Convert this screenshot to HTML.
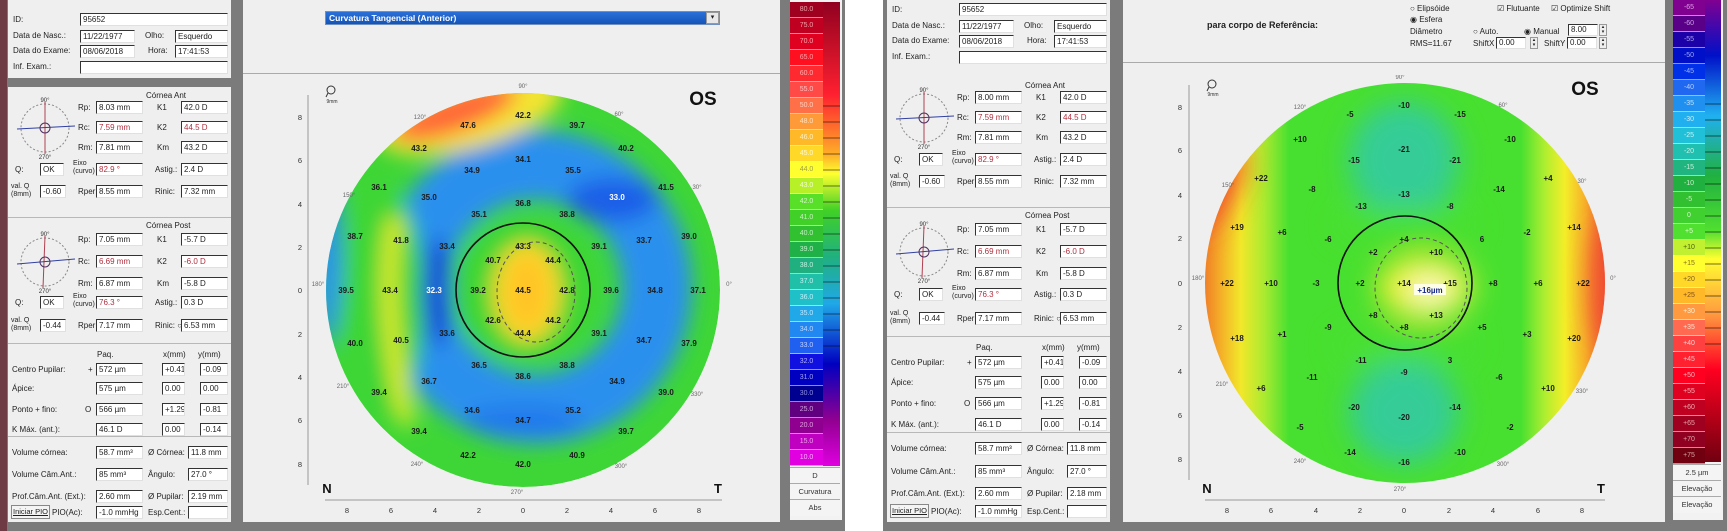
<!DOCTYPE html>
<html><head><meta charset="utf-8">
<style>
*{margin:0;padding:0;box-sizing:border-box}
body{width:1727px;height:531px;background:#fff;position:relative;overflow:hidden;font-family:"Liberation Sans",Arial,sans-serif;color:#222}
.a{position:absolute}
.g{position:absolute;background:#7b7b7b}
.pn{position:absolute;background:#efefef}
.l{position:absolute;font-size:8px;line-height:10px;white-space:nowrap;color:#222}
.b{position:absolute;height:13px;background:#fff;border-top:1px solid #333;border-left:1px solid #333;border-bottom:1px solid #e0e0e0;border-right:1px solid #e0e0e0;font-size:8px;line-height:11px;padding-left:2px;white-space:nowrap;color:#222;overflow:hidden}
.r{color:#b03040}
.hr{position:absolute;height:1px;background:#b8b8b8;left:0;right:0}
.cb div{position:absolute;height:16px;font-size:7px;line-height:16px;text-align:center;border-bottom:1px solid rgba(255,255,255,.55)}
.cbl div{position:absolute;left:0;width:100%;background:#f4f4f4;font-size:7.5px;text-align:center;border-top:1px solid #aaa;color:#333}
</style></head><body>

<!-- left screenshot frame -->
<div class="g" style="left:0;top:0;width:845px;height:531px"></div>
<div class="a" style="left:0;top:0;width:7px;height:531px;background:#6e3a44"></div>
<!-- right screenshot frame -->
<div class="g" style="left:883px;top:0;width:844px;height:531px"></div>

<!-- LEFT INFO PANEL -->
<div class="a" style="left:8px;top:0;width:223px;height:522px">
 <div class="pn" style="left:0;top:0;width:223px;height:78px"></div>
 <div class="l" style="left:5px;top:15px">ID:</div><div class="b" style="left:72px;top:13px;width:148px">95652</div>
 <div class="l" style="left:5px;top:31px">Data de Nasc.:</div><div class="b" style="left:72px;top:30px;width:55px">11/22/1977</div>
 <div class="l" style="left:137px;top:31px">Olho:</div><div class="b" style="left:167px;top:30px;width:53px">Esquerdo</div>
 <div class="l" style="left:5px;top:46px">Data do Exame:</div><div class="b" style="left:72px;top:45px;width:55px">08/06/2018</div>
 <div class="l" style="left:140px;top:46px">Hora:</div><div class="b" style="left:167px;top:45px;width:53px">17:41:53</div>
 <div class="l" style="left:5px;top:62px">Inf. Exam.:</div><div class="b" style="left:72px;top:61px;width:148px"></div>

 <div class="pn" style="left:0;top:87px;width:223px;height:435px"></div>
 <div class="l" style="left:138px;top:91px">Córnea Ant</div>
 <svg class="a" style="left:5px;top:96px" width="64" height="64" viewBox="0 0 64 64"><circle cx="32" cy="32" r="24" fill="none" stroke="#888" stroke-dasharray="2 2"/><line x1="32" y1="6" x2="32" y2="58" stroke="#b04050"/><line x1="4" y1="33" x2="62" y2="30" stroke="#3040a0"/><circle cx="32" cy="32" r="5" fill="none" stroke="#503060"/><text x="32" y="6" font-size="6" text-anchor="middle" fill="#333">90°</text><text x="32" y="63" font-size="6" text-anchor="middle" fill="#333">270°</text></svg>
 <div class="l" style="left:70px;top:103px">Rp:</div><div class="b" style="left:88px;top:101px;width:47px">8.03 mm</div>
 <div class="l" style="left:149px;top:103px">K1</div><div class="b" style="left:173px;top:101px;width:47px">42.0 D</div>
 <div class="l" style="left:70px;top:123px">Rc:</div><div class="b r" style="left:88px;top:121px;width:47px">7.59 mm</div>
 <div class="l" style="left:149px;top:123px">K2</div><div class="b r" style="left:173px;top:121px;width:47px">44.5 D</div>
 <div class="l" style="left:70px;top:143px">Rm:</div><div class="b" style="left:88px;top:141px;width:47px">7.81 mm</div>
 <div class="l" style="left:149px;top:143px">Km</div><div class="b" style="left:173px;top:141px;width:47px">43.2 D</div>
 <div class="l" style="left:7px;top:165px">Q:</div><div class="b" style="left:32px;top:163px;width:24px">OK</div>
 <div class="l" style="left:65px;top:160px;font-size:7px;line-height:8px">Eixo<br>(curvo)</div><div class="b r" style="left:88px;top:163px;width:47px">82.9 °</div>
 <div class="l" style="left:147px;top:165px">Astig.:</div><div class="b" style="left:173px;top:163px;width:47px">2.4 D</div>
 <div class="l" style="left:3px;top:183px;font-size:7px;line-height:8px">val. Q<br>(8mm)</div><div class="b" style="left:32px;top:185px;width:26px">-0.60</div>
 <div class="l" style="left:70px;top:187px">Rper:</div><div class="b" style="left:88px;top:185px;width:47px">8.55 mm</div>
 <div class="l" style="left:147px;top:187px">Rinic:</div><div class="b" style="left:173px;top:185px;width:47px">7.32 mm</div>
 <div class="hr" style="top:217px"></div>
 <div class="l" style="left:138px;top:221px">Córnea Post</div>
 <svg class="a" style="left:5px;top:230px" width="64" height="64" viewBox="0 0 64 64"><circle cx="32" cy="32" r="24" fill="none" stroke="#888" stroke-dasharray="2 2"/><line x1="32" y1="6" x2="30" y2="58" stroke="#b04050"/><line x1="4" y1="34" x2="62" y2="29" stroke="#3040a0"/><circle cx="32" cy="32" r="5" fill="none" stroke="#503060"/><text x="32" y="6" font-size="6" text-anchor="middle" fill="#333">90°</text><text x="32" y="63" font-size="6" text-anchor="middle" fill="#333">270°</text></svg>
 <div class="l" style="left:70px;top:235px">Rp:</div><div class="b" style="left:88px;top:233px;width:47px">7.05 mm</div>
 <div class="l" style="left:149px;top:235px">K1</div><div class="b" style="left:173px;top:233px;width:47px">-5.7 D</div>
 <div class="l" style="left:70px;top:257px">Rc:</div><div class="b r" style="left:88px;top:255px;width:47px">6.69 mm</div>
 <div class="l" style="left:149px;top:257px">K2</div><div class="b r" style="left:173px;top:255px;width:47px">-6.0 D</div>
 <div class="l" style="left:70px;top:279px">Rm:</div><div class="b" style="left:88px;top:277px;width:47px">6.87 mm</div>
 <div class="l" style="left:149px;top:279px">Km</div><div class="b" style="left:173px;top:277px;width:47px">-5.8 D</div>
 <div class="l" style="left:7px;top:298px">Q:</div><div class="b" style="left:32px;top:296px;width:24px">OK</div>
 <div class="l" style="left:65px;top:293px;font-size:7px;line-height:8px">Eixo<br>(curvo)</div><div class="b r" style="left:88px;top:296px;width:47px">76.3 °</div>
 <div class="l" style="left:147px;top:298px">Astig.:</div><div class="b" style="left:173px;top:296px;width:47px">0.3 D</div>
 <div class="l" style="left:3px;top:317px;font-size:7px;line-height:8px">val. Q<br>(8mm)</div><div class="b" style="left:32px;top:319px;width:26px">-0.44</div>
 <div class="l" style="left:70px;top:321px">Rper:</div><div class="b" style="left:88px;top:319px;width:47px">7.17 mm</div>
 <div class="l" style="left:147px;top:321px">Rinic: ○</div><div class="b" style="left:173px;top:319px;width:47px">6.53 mm</div>
 <div class="hr" style="top:343px"></div>
 <div class="l" style="left:89px;top:350px">Paq.</div><div class="l" style="left:155px;top:350px">x(mm)</div><div class="l" style="left:190px;top:350px">y(mm)</div>
 <div class="l" style="left:4px;top:365px">Centro Pupilar:</div><div class="l" style="left:80px;top:365px">+</div><div class="b" style="left:88px;top:363px;width:47px">572 µm</div><div class="b" style="left:154px;top:363px;width:23px">+0.41</div><div class="b" style="left:192px;top:363px;width:28px">-0.09</div>
 <div class="l" style="left:4px;top:384px">Ápice:</div><div class="b" style="left:88px;top:382px;width:47px">575 µm</div><div class="b" style="left:154px;top:382px;width:23px">0.00</div><div class="b" style="left:192px;top:382px;width:28px">0.00</div>
 <div class="l" style="left:4px;top:405px">Ponto + fino:</div><div class="l" style="left:77px;top:405px">O</div><div class="b" style="left:88px;top:403px;width:47px">566 µm</div><div class="b" style="left:154px;top:403px;width:23px">+1.29</div><div class="b" style="left:192px;top:403px;width:28px">-0.81</div>
 <div class="l" style="left:4px;top:425px">K Máx. (ant.):</div><div class="b" style="left:88px;top:423px;width:47px">46.1 D</div><div class="b" style="left:154px;top:423px;width:23px">0.00</div><div class="b" style="left:192px;top:423px;width:28px">-0.14</div>
 <div class="hr" style="top:436px"></div>
 <div class="l" style="left:4px;top:448px">Volume córnea:</div><div class="b" style="left:88px;top:446px;width:47px">58.7 mm³</div><div class="l" style="left:140px;top:448px">Ø Córnea:</div><div class="b" style="left:180px;top:446px;width:40px">11.8 mm</div>
 <div class="l" style="left:4px;top:470px">Volume Câm.Ant.:</div><div class="b" style="left:88px;top:468px;width:47px">85 mm³</div><div class="l" style="left:140px;top:470px">Ângulo:</div><div class="b" style="left:180px;top:468px;width:40px">27.0 °</div>
 <div class="l" style="left:4px;top:492px">Prof.Câm.Ant. (Ext.):</div><div class="b" style="left:88px;top:490px;width:47px">2.60 mm</div><div class="l" style="left:140px;top:492px">Ø Pupilar:</div><div class="b" style="left:180px;top:490px;width:40px">2.19 mm</div>
 <div class="l" style="left:3px;top:505px;width:39px;height:14px;border:1px solid #888;background:#f4f4f4;line-height:12px;text-align:center;text-decoration:underline;font-size:7.5px">Iniciar PIO</div>
 <div class="l" style="left:44px;top:508px">PIO(Ac):</div><div class="b" style="left:88px;top:506px;width:47px">-1.0 mmHg</div><div class="l" style="left:140px;top:508px">Esp.Cent.:</div><div class="b" style="left:180px;top:506px;width:40px"></div>
</div>

<!-- RIGHT INFO PANEL (copy) -->
<div class="a" style="left:887px;top:0;width:223px;height:522px">
 <div class="pn" style="left:0;top:0;width:223px;height:78px"></div>
 <div class="l" style="left:5px;top:5px">ID:</div><div class="b" style="left:72px;top:3px;width:148px">95652</div>
 <div class="l" style="left:5px;top:21px">Data de Nasc.:</div><div class="b" style="left:72px;top:20px;width:55px">11/22/1977</div>
 <div class="l" style="left:137px;top:21px">Olho:</div><div class="b" style="left:167px;top:20px;width:53px">Esquerdo</div>
 <div class="l" style="left:5px;top:36px">Data do Exame:</div><div class="b" style="left:72px;top:35px;width:55px">08/06/2018</div>
 <div class="l" style="left:140px;top:36px">Hora:</div><div class="b" style="left:167px;top:35px;width:53px">17:41:53</div>
 <div class="l" style="left:5px;top:52px">Inf. Exam.:</div><div class="b" style="left:72px;top:51px;width:148px"></div>
 <div class="pn" style="left:0;top:77px;width:223px;height:445px"></div>
 <div class="l" style="left:138px;top:81px">Córnea Ant</div>
 <svg class="a" style="left:5px;top:86px" width="64" height="64" viewBox="0 0 64 64"><circle cx="32" cy="32" r="24" fill="none" stroke="#888" stroke-dasharray="2 2"/><line x1="32" y1="6" x2="32" y2="58" stroke="#b04050"/><line x1="4" y1="33" x2="62" y2="30" stroke="#3040a0"/><circle cx="32" cy="32" r="5" fill="none" stroke="#503060"/><text x="32" y="6" font-size="6" text-anchor="middle" fill="#333">90°</text><text x="32" y="63" font-size="6" text-anchor="middle" fill="#333">270°</text></svg>
 <div class="l" style="left:70px;top:93px">Rp:</div><div class="b" style="left:88px;top:91px;width:47px">8.00 mm</div>
 <div class="l" style="left:149px;top:93px">K1</div><div class="b" style="left:173px;top:91px;width:47px">42.0 D</div>
 <div class="l" style="left:70px;top:113px">Rc:</div><div class="b r" style="left:88px;top:111px;width:47px">7.59 mm</div>
 <div class="l" style="left:149px;top:113px">K2</div><div class="b r" style="left:173px;top:111px;width:47px">44.5 D</div>
 <div class="l" style="left:70px;top:133px">Rm:</div><div class="b" style="left:88px;top:131px;width:47px">7.81 mm</div>
 <div class="l" style="left:149px;top:133px">Km</div><div class="b" style="left:173px;top:131px;width:47px">43.2 D</div>
 <div class="l" style="left:7px;top:155px">Q:</div><div class="b" style="left:32px;top:153px;width:24px">OK</div>
 <div class="l" style="left:65px;top:150px;font-size:7px;line-height:8px">Eixo<br>(curvo)</div><div class="b r" style="left:88px;top:153px;width:47px">82.9 °</div>
 <div class="l" style="left:147px;top:155px">Astig.:</div><div class="b" style="left:173px;top:153px;width:47px">2.4 D</div>
 <div class="l" style="left:3px;top:173px;font-size:7px;line-height:8px">val. Q<br>(8mm)</div><div class="b" style="left:32px;top:175px;width:26px">-0.60</div>
 <div class="l" style="left:70px;top:177px">Rper:</div><div class="b" style="left:88px;top:175px;width:47px">8.55 mm</div>
 <div class="l" style="left:147px;top:177px">Rinic:</div><div class="b" style="left:173px;top:175px;width:47px">7.32 mm</div>
 <div class="hr" style="top:207px"></div>
 <div class="l" style="left:138px;top:211px">Córnea Post</div>
 <svg class="a" style="left:5px;top:220px" width="64" height="64" viewBox="0 0 64 64"><circle cx="32" cy="32" r="24" fill="none" stroke="#888" stroke-dasharray="2 2"/><line x1="32" y1="6" x2="30" y2="58" stroke="#b04050"/><line x1="4" y1="34" x2="62" y2="29" stroke="#3040a0"/><circle cx="32" cy="32" r="5" fill="none" stroke="#503060"/><text x="32" y="6" font-size="6" text-anchor="middle" fill="#333">90°</text><text x="32" y="63" font-size="6" text-anchor="middle" fill="#333">270°</text></svg>
 <div class="l" style="left:70px;top:225px">Rp:</div><div class="b" style="left:88px;top:223px;width:47px">7.05 mm</div>
 <div class="l" style="left:149px;top:225px">K1</div><div class="b" style="left:173px;top:223px;width:47px">-5.7 D</div>
 <div class="l" style="left:70px;top:247px">Rc:</div><div class="b r" style="left:88px;top:245px;width:47px">6.69 mm</div>
 <div class="l" style="left:149px;top:247px">K2</div><div class="b r" style="left:173px;top:245px;width:47px">-6.0 D</div>
 <div class="l" style="left:70px;top:269px">Rm:</div><div class="b" style="left:88px;top:267px;width:47px">6.87 mm</div>
 <div class="l" style="left:149px;top:269px">Km</div><div class="b" style="left:173px;top:267px;width:47px">-5.8 D</div>
 <div class="l" style="left:7px;top:290px">Q:</div><div class="b" style="left:32px;top:288px;width:24px">OK</div>
 <div class="l" style="left:65px;top:285px;font-size:7px;line-height:8px">Eixo<br>(curvo)</div><div class="b r" style="left:88px;top:288px;width:47px">76.3 °</div>
 <div class="l" style="left:147px;top:290px">Astig.:</div><div class="b" style="left:173px;top:288px;width:47px">0.3 D</div>
 <div class="l" style="left:3px;top:310px;font-size:7px;line-height:8px">val. Q<br>(8mm)</div><div class="b" style="left:32px;top:312px;width:26px">-0.44</div>
 <div class="l" style="left:70px;top:314px">Rper:</div><div class="b" style="left:88px;top:312px;width:47px">7.17 mm</div>
 <div class="l" style="left:147px;top:314px">Rinic: ○</div><div class="b" style="left:173px;top:312px;width:47px">6.53 mm</div>
 <div class="hr" style="top:336px"></div>
 <div class="l" style="left:89px;top:343px">Paq.</div><div class="l" style="left:155px;top:343px">x(mm)</div><div class="l" style="left:190px;top:343px">y(mm)</div>
 <div class="l" style="left:4px;top:358px">Centro Pupilar:</div><div class="l" style="left:80px;top:358px">+</div><div class="b" style="left:88px;top:356px;width:47px">572 µm</div><div class="b" style="left:154px;top:356px;width:23px">+0.41</div><div class="b" style="left:192px;top:356px;width:28px">-0.09</div>
 <div class="l" style="left:4px;top:378px">Ápice:</div><div class="b" style="left:88px;top:376px;width:47px">575 µm</div><div class="b" style="left:154px;top:376px;width:23px">0.00</div><div class="b" style="left:192px;top:376px;width:28px">0.00</div>
 <div class="l" style="left:4px;top:399px">Ponto + fino:</div><div class="l" style="left:77px;top:399px">O</div><div class="b" style="left:88px;top:397px;width:47px">566 µm</div><div class="b" style="left:154px;top:397px;width:23px">+1.29</div><div class="b" style="left:192px;top:397px;width:28px">-0.81</div>
 <div class="l" style="left:4px;top:420px">K Máx. (ant.):</div><div class="b" style="left:88px;top:418px;width:47px">46.1 D</div><div class="b" style="left:154px;top:418px;width:23px">0.00</div><div class="b" style="left:192px;top:418px;width:28px">-0.14</div>
 <div class="hr" style="top:432px"></div>
 <div class="l" style="left:4px;top:444px">Volume córnea:</div><div class="b" style="left:88px;top:442px;width:47px">58.7 mm³</div><div class="l" style="left:140px;top:444px">Ø Córnea:</div><div class="b" style="left:180px;top:442px;width:40px">11.8 mm</div>
 <div class="l" style="left:4px;top:467px">Volume Câm.Ant.:</div><div class="b" style="left:88px;top:465px;width:47px">85 mm³</div><div class="l" style="left:140px;top:467px">Ângulo:</div><div class="b" style="left:180px;top:465px;width:40px">27.0 °</div>
 <div class="l" style="left:4px;top:489px">Prof.Câm.Ant. (Ext.):</div><div class="b" style="left:88px;top:487px;width:47px">2.60 mm</div><div class="l" style="left:140px;top:489px">Ø Pupilar:</div><div class="b" style="left:180px;top:487px;width:40px">2.18 mm</div>
 <div class="l" style="left:3px;top:504px;width:39px;height:14px;border:1px solid #888;background:#f4f4f4;line-height:12px;text-align:center;text-decoration:underline;font-size:7.5px">Iniciar PIO</div>
 <div class="l" style="left:44px;top:507px">PIO(Ac):</div><div class="b" style="left:88px;top:505px;width:47px">-1.0 mmHg</div><div class="l" style="left:140px;top:507px">Esp.Cent.:</div><div class="b" style="left:180px;top:505px;width:40px"></div>
</div>

<!-- map panels -->
<div class="pn" style="left:243px;top:0;width:537px;height:522px"></div>
<div class="a" style="left:243px;top:73px;width:537px;height:1px;background:#aaa"></div>
<div class="pn" style="left:1123px;top:0;width:542px;height:522px"></div>
<div class="a" style="left:1123px;top:62px;width:542px;height:1px;background:#aaa"></div>

<!-- dropdown -->
<div class="a" style="left:325px;top:11px;width:395px;height:14px;background:linear-gradient(#2a70d8,#1454b8);border:1px solid #7090c0"></div>
<div class="a" style="left:329px;top:12px;font-size:8.5px;line-height:12px;font-weight:bold;color:#fff">Curvatura Tangencial (Anterior)</div>
<div class="a" style="left:706px;top:12px;width:13px;height:12px;background:#e8e8e8;border:1px solid #999;font-size:7px;line-height:10px;text-align:center">▾</div>

<!-- right header -->
<div class="a" style="left:1207px;top:20px;font-size:9px;font-weight:bold;color:#222">para corpo de Referência:</div>
<div class="l" style="left:1410px;top:4px">○ Elipsóide</div>
<div class="l" style="left:1410px;top:15px">◉ Esfera</div>
<div class="l" style="left:1410px;top:27px">Diâmetro</div>
<div class="l" style="left:1410px;top:39px">RMS=11.67</div>
<div class="l" style="left:1497px;top:4px">☑ Flutuante</div>
<div class="l" style="left:1551px;top:4px">☑ Optimize Shift</div>
<div class="l" style="left:1473px;top:27px">○ Auto.</div>
<div class="l" style="left:1524px;top:27px">◉ Manual</div>
<div class="b" style="left:1568px;top:24px;width:30px;height:12px;line-height:10px">8.00</div>
<div class="a" style="left:1599px;top:24px;width:8px;height:12px;border:1px solid #999;font-size:5px;line-height:5px;text-align:center">▴<br>▾</div>
<div class="l" style="left:1473px;top:39px">ShiftX</div>
<div class="b" style="left:1496px;top:37px;width:30px;height:12px;line-height:10px">0.00</div>
<div class="a" style="left:1530px;top:37px;width:8px;height:12px;border:1px solid #999;font-size:5px;line-height:5px;text-align:center">▴<br>▾</div>
<div class="l" style="left:1544px;top:39px">ShiftY</div>
<div class="b" style="left:1567px;top:37px;width:30px;height:12px;line-height:10px">0.00</div>
<div class="a" style="left:1599px;top:37px;width:8px;height:12px;border:1px solid #999;font-size:5px;line-height:5px;text-align:center">▴<br>▾</div>

<!-- colorbars -->
<div class="a" style="left:790px;top:0;width:52px;height:520px;background:#f2f2f2"></div>
<div class="a cb" style="left:790px;top:2px;width:50px;height:464px">
<div style="top:0;left:0;width:33px;background:#a00020;color:#e8a0a8">80.0</div>
<div style="top:16px;left:0;width:33px;background:#c00020;color:#f0a0a8">75.0</div>
<div style="top:32px;left:0;width:33px;background:#e00020;color:#f8a8b0">70.0</div>
<div style="top:48px;left:0;width:33px;background:#ff1020;color:#ffa0a8">65.0</div>
<div style="top:64px;left:0;width:33px;background:#ff2a30;color:#ffb0b0">60.0</div>
<div style="top:80px;left:0;width:33px;background:#ff4a48;color:#ffc0c0">55.0</div>
<div style="top:96px;left:0;width:33px;background:#ff7048;color:#ffd0c0">50.0</div>
<div style="top:112px;left:0;width:33px;background:#ff9a38;color:#ffe0c0">48.0</div>
<div style="top:128px;left:0;width:33px;background:#ffb828;color:#fff0c0">46.0</div>
<div style="top:144px;left:0;width:33px;background:#ffd828;color:#fff8d0">45.0</div>
<div style="top:160px;left:0;width:33px;background:#ffff30;color:#a0a040">44.0</div>
<div style="top:176px;left:0;width:33px;background:#b8f028;color:#f0ffd0">43.0</div>
<div style="top:192px;left:0;width:33px;background:#58e028;color:#d0f8c0">42.0</div>
<div style="top:208px;left:0;width:33px;background:#40d028;color:#c8f0c0">41.0</div>
<div style="top:224px;left:0;width:33px;background:#30c030;color:#c0f0c0">40.0</div>
<div style="top:240px;left:0;width:33px;background:#20b048;color:#c0f0c8">39.0</div>
<div style="top:256px;left:0;width:33px;background:#20b080;color:#c0f0e0">38.0</div>
<div style="top:272px;left:0;width:33px;background:#20c0a8;color:#c0f0f0">37.0</div>
<div style="top:288px;left:0;width:33px;background:#20c0c8;color:#c0f0f8">36.0</div>
<div style="top:304px;left:0;width:33px;background:#20a8e8;color:#c0e8ff">35.0</div>
<div style="top:320px;left:0;width:33px;background:#2088f0;color:#c0d8ff">34.0</div>
<div style="top:336px;left:0;width:33px;background:#2060f0;color:#c0d0ff">33.0</div>
<div style="top:352px;left:0;width:33px;background:#1010e0;color:#b0b0ff">32.0</div>
<div style="top:368px;left:0;width:33px;background:#0000c0;color:#a0a0f0">31.0</div>
<div style="top:384px;left:0;width:33px;background:#000090;color:#9090e0">30.0</div>
<div style="top:400px;left:0;width:33px;background:#600080;color:#d0a0e0">25.0</div>
<div style="top:416px;left:0;width:33px;background:#900090;color:#e0a0e0">20.0</div>
<div style="top:432px;left:0;width:33px;background:#c000c0;color:#f0a0f0">15.0</div>
<div style="top:448px;left:0;width:33px;background:#e000e0;color:#f8b0f8">10.0</div>
</div>
<svg class="a" style="left:823px;top:2px" width="17" height="464">
<rect width="17" height="464" fill="url(#lg1)"/>
<defs><linearGradient id="lg1" x1="0" y1="0" x2="0" y2="1"><stop offset="0" stop-color="#900020"/><stop offset=".2" stop-color="#ff2030"/><stop offset=".33" stop-color="#ffb028"/><stop offset=".37" stop-color="#ffff30"/><stop offset=".45" stop-color="#40d028"/><stop offset=".55" stop-color="#20b080"/><stop offset=".65" stop-color="#20a8e8"/><stop offset=".78" stop-color="#0000c0"/><stop offset=".9" stop-color="#900090"/><stop offset="1" stop-color="#e000e0"/></linearGradient></defs>
<g stroke="#000" stroke-width=".8" opacity=".7"><line x1="0" y1="104" x2="17" y2="104"/><line x1="0" y1="120" x2="17" y2="120"/><line x1="0" y1="136" x2="17" y2="136"/><line x1="0" y1="152" x2="17" y2="152"/><line x1="0" y1="168" x2="17" y2="168"/><line x1="0" y1="184" x2="17" y2="184"/><line x1="0" y1="200" x2="17" y2="200"/><line x1="0" y1="216" x2="17" y2="216"/><line x1="0" y1="232" x2="17" y2="232"/><line x1="0" y1="248" x2="17" y2="248"/><line x1="0" y1="264" x2="17" y2="264"/><line x1="0" y1="280" x2="17" y2="280"/><line x1="0" y1="296" x2="17" y2="296"/><line x1="0" y1="312" x2="17" y2="312"/><line x1="0" y1="328" x2="17" y2="328"/><line x1="0" y1="344" x2="17" y2="344"/></g>
</svg>
<div class="a cbl" style="left:790px;top:467px;width:50px;height:52px">
<div style="top:0;height:16px;line-height:15px">D</div><div style="top:16px;height:16px;line-height:15px">Curvatura</div><div style="top:32px;height:17px;line-height:15px">Abs</div>
</div>

<div class="a" style="left:1673px;top:0;width:50px;height:520px;background:#f2f2f2"></div>
<div class="a cb" style="left:1673px;top:0;width:48px;height:464px">
<div style="top:0;left:0;width:32px;background:#800090;color:#d8a0e0">-65</div>
<div style="top:16px;left:0;width:32px;background:#5a0088;color:#c8a0e0">-60</div>
<div style="top:32px;left:0;width:32px;background:#1c00a8;color:#a8a0f0">-55</div>
<div style="top:48px;left:0;width:32px;background:#0010c8;color:#a0a8f8">-50</div>
<div style="top:64px;left:0;width:32px;background:#0030e8;color:#a0b8ff">-45</div>
<div style="top:80px;left:0;width:32px;background:#2068f0;color:#b8d0ff">-40</div>
<div style="top:96px;left:0;width:32px;background:#2090f0;color:#c0e0ff">-35</div>
<div style="top:112px;left:0;width:32px;background:#20b0f0;color:#c8eeff">-30</div>
<div style="top:128px;left:0;width:32px;background:#20c0d8;color:#c8f4f8">-25</div>
<div style="top:144px;left:0;width:32px;background:#20c0b0;color:#c8f4e8">-20</div>
<div style="top:160px;left:0;width:32px;background:#20b480;color:#c8f0d8">-15</div>
<div style="top:176px;left:0;width:32px;background:#20b040;color:#c8f0c8">-10</div>
<div style="top:192px;left:0;width:32px;background:#30c030;color:#c8f0c0">-5</div>
<div style="top:208px;left:0;width:32px;background:#40d030;color:#d0f8c8">0</div>
<div style="top:224px;left:0;width:32px;background:#50e030;color:#d8ffc8">+5</div>
<div style="top:240px;left:0;width:32px;background:#c0f030;color:#506010">+10</div>
<div style="top:256px;left:0;width:32px;background:#ffff30;color:#807020">+15</div>
<div style="top:272px;left:0;width:32px;background:#ffd828;color:#806020">+20</div>
<div style="top:288px;left:0;width:32px;background:#ffb828;color:#805020">+25</div>
<div style="top:304px;left:0;width:32px;background:#ff9a40;color:#fff0d8">+30</div>
<div style="top:320px;left:0;width:32px;background:#ff6a50;color:#ffe0d0">+35</div>
<div style="top:336px;left:0;width:32px;background:#ff4040;color:#ffd0d0">+40</div>
<div style="top:352px;left:0;width:32px;background:#ff2030;color:#ffc0c0">+45</div>
<div style="top:368px;left:0;width:32px;background:#ff0020;color:#ffb0b8">+50</div>
<div style="top:384px;left:0;width:32px;background:#e00020;color:#f8b0b8">+55</div>
<div style="top:400px;left:0;width:32px;background:#c00020;color:#f0a8b0">+60</div>
<div style="top:416px;left:0;width:32px;background:#a00020;color:#e8a0a8">+65</div>
<div style="top:432px;left:0;width:32px;background:#900020;color:#e0a0a8">+70</div>
<div style="top:448px;left:0;width:32px;background:#700010;color:#d8a0a0">+75</div>
</div>
<svg class="a" style="left:1705px;top:0" width="16" height="462">
<defs><linearGradient id="lg2" x1="0" y1="0" x2="0" y2="1"><stop offset="0" stop-color="#800090"/><stop offset=".12" stop-color="#0010c8"/><stop offset=".25" stop-color="#20b0f0"/><stop offset=".38" stop-color="#20b040"/><stop offset=".5" stop-color="#50e030"/><stop offset=".56" stop-color="#ffff30"/><stop offset=".68" stop-color="#ff9a40"/><stop offset=".8" stop-color="#ff0020"/><stop offset="1" stop-color="#700010"/></linearGradient></defs>
<rect width="16" height="462" fill="url(#lg2)"/>
<g stroke="#000" stroke-width=".8" opacity=".7"><line x1="0" y1="104" x2="16" y2="104"/><line x1="0" y1="120" x2="16" y2="120"/><line x1="0" y1="136" x2="16" y2="136"/><line x1="0" y1="152" x2="16" y2="152"/><line x1="0" y1="168" x2="16" y2="168"/><line x1="0" y1="184" x2="16" y2="184"/><line x1="0" y1="200" x2="16" y2="200"/><line x1="0" y1="216" x2="16" y2="216"/><line x1="0" y1="232" x2="16" y2="232"/><line x1="0" y1="248" x2="16" y2="248"/><line x1="0" y1="264" x2="16" y2="264"/><line x1="0" y1="280" x2="16" y2="280"/><line x1="0" y1="296" x2="16" y2="296"/><line x1="0" y1="312" x2="16" y2="312"/><line x1="0" y1="328" x2="16" y2="328"/><line x1="0" y1="344" x2="16" y2="344"/></g>
</svg>
<div class="a cbl" style="left:1673px;top:464px;width:48px;height:52px">
<div style="top:0;height:16px;line-height:15px">2.5 µm</div><div style="top:16px;height:16px;line-height:15px">Elevação</div><div style="top:32px;height:17px;line-height:15px">Elevação</div>
</div>

<!-- MAPS -->
<svg class="a" style="left:0;top:0" width="1727" height="531" viewBox="0 0 1727 531" font-family="Liberation Sans, Arial, sans-serif">
<defs>
<clipPath id="c1"><circle cx="523" cy="290" r="197"/></clipPath>
<clipPath id="c2"><circle cx="1405" cy="283" r="200"/></clipPath>
<filter id="bl" x="-30%" y="-30%" width="160%" height="160%"><feGaussianBlur stdDeviation="10"/></filter>
<filter id="bl2" x="-30%" y="-30%" width="160%" height="160%"><feGaussianBlur stdDeviation="14"/></filter>
<linearGradient id="rg" gradientUnits="userSpaceOnUse" x1="1205" y1="0" x2="1605" y2="0">
<stop offset="0" stop-color="#f08028"/><stop offset=".04" stop-color="#f4b028"/><stop offset=".09" stop-color="#f2e82a"/><stop offset=".15" stop-color="#a8ea30"/><stop offset=".21" stop-color="#48e030"/><stop offset=".79" stop-color="#48e030"/><stop offset=".85" stop-color="#b0ee30"/><stop offset=".9" stop-color="#f4ee28"/><stop offset=".95" stop-color="#f6b02a"/><stop offset="1" stop-color="#f05030"/></linearGradient>
</defs>

<!-- left map -->
<g clip-path="url(#c1)">
<circle cx="523" cy="290" r="197" fill="#3ed636"/>
<g filter="url(#bl)">
<circle cx="535" cy="287" r="122" fill="none" stroke="#2a90ee" stroke-width="70"/>
<ellipse cx="612" cy="200" rx="45" ry="22" fill="#1a5ee8"/>
<ellipse cx="523" cy="420" rx="60" ry="14" fill="#2478ec"/>
<ellipse cx="383" cy="300" rx="42" ry="112" fill="#3ed636"/>
<ellipse cx="437" cy="292" rx="15" ry="55" fill="#1444e0"/>
<path d="M396 218 Q378 300 408 425" stroke="#f2ee2a" stroke-width="14" fill="none"/>
<ellipse cx="328" cy="255" rx="14" ry="90" fill="#2a90ee"/>
<circle cx="523" cy="290" r="72" fill="#3ed636"/>
<ellipse cx="527" cy="292" rx="34" ry="50" fill="#ffd82a"/>
<ellipse cx="527" cy="292" rx="20" ry="36" fill="#ffc428"/>
<ellipse cx="470" cy="114" rx="95" ry="34" transform="rotate(-15 470 114)" fill="#f4e430"/>
<ellipse cx="455" cy="112" rx="65" ry="20" transform="rotate(-20 455 112)" fill="#ff6838"/>
</g>
</g>
<circle cx="523" cy="290" r="67" fill="none" stroke="#111" stroke-width="1.6"/>
<ellipse cx="536" cy="292" rx="39" ry="50" fill="none" stroke="#555" stroke-width="1" stroke-dasharray="4 3"/>

<!-- left axes -->
<g stroke="#999" stroke-width="1"><line x1="308" y1="95" x2="308" y2="485"/><line x1="325" y1="500" x2="722" y2="500"/></g>
<g font-size="7.5" fill="#333" text-anchor="middle">
<text x="300" y="120">8</text><text x="300" y="163">6</text><text x="300" y="207">4</text><text x="300" y="250">2</text><text x="300" y="293">0</text><text x="300" y="337">2</text><text x="300" y="380">4</text><text x="300" y="423">6</text><text x="300" y="467">8</text>
<text x="347" y="513">8</text><text x="391" y="513">6</text><text x="435" y="513">4</text><text x="479" y="513">2</text><text x="523" y="513">0</text><text x="567" y="513">2</text><text x="611" y="513">4</text><text x="655" y="513">6</text><text x="699" y="513">8</text>
</g>
<text x="327" y="493" font-size="13" font-weight="bold" fill="#111" text-anchor="middle">N</text>
<text x="718" y="493" font-size="13" font-weight="bold" fill="#111" text-anchor="middle">T</text>
<text x="703" y="105" font-size="19" font-weight="bold" fill="#111" text-anchor="middle">OS</text>
<circle cx="331" cy="90" r="4" fill="none" stroke="#333"/><line x1="328" y1="93" x2="326" y2="97" stroke="#333"/><text x="332" y="103" font-size="5" fill="#333" text-anchor="middle">9mm</text>
<g font-size="6" fill="#666" text-anchor="middle">
<text x="523" y="88">90°</text><text x="619" y="116">60°</text><text x="697" y="189">30°</text><text x="729" y="286">0°</text><text x="697" y="396">330°</text><text x="621" y="468">300°</text><text x="517" y="494">270°</text><text x="417" y="466">240°</text><text x="343" y="388">210°</text><text x="318" y="286">180°</text><text x="349" y="197">150°</text><text x="420" y="119">120°</text>
</g>
<g font-size="8" font-weight="bold" fill="#1a1a1a" text-anchor="middle" dominant-baseline="middle">
<text x="523" y="116">42.2</text><text x="468" y="126">47.6</text><text x="577" y="126">39.7</text><text x="419" y="149">43.2</text><text x="626" y="149">40.2</text><text x="523" y="160">34.1</text><text x="472" y="171">34.9</text><text x="573" y="171">35.5</text><text x="379" y="188">36.1</text><text x="666" y="188">41.5</text><text x="429" y="198">35.0</text><text x="617" y="198" fill="#fff">33.0</text><text x="523" y="204">36.8</text><text x="479" y="215">35.1</text><text x="567" y="215">38.8</text>
<text x="355" y="237">38.7</text><text x="401" y="241">41.8</text><text x="447" y="247">33.4</text><text x="523" y="247">43.3</text><text x="599" y="247">39.1</text><text x="644" y="241">33.7</text><text x="689" y="237">39.0</text><text x="493" y="261">40.7</text><text x="553" y="261">44.4</text>
<text x="346" y="291">39.5</text><text x="390" y="291">43.4</text><text x="434" y="291" fill="#fff">32.3</text><text x="478" y="291">39.2</text><text x="523" y="291">44.5</text><text x="567" y="291">42.8</text><text x="611" y="291">39.6</text><text x="655" y="291">34.8</text><text x="698" y="291">37.1</text>
<text x="493" y="321">42.6</text><text x="553" y="321">44.2</text><text x="447" y="334">33.6</text><text x="523" y="334">44.4</text><text x="599" y="334">39.1</text><text x="355" y="344">40.0</text><text x="401" y="341">40.5</text><text x="644" y="341">34.7</text><text x="689" y="344">37.9</text>
<text x="479" y="366">36.5</text><text x="567" y="366">38.8</text><text x="523" y="377">38.6</text><text x="429" y="382">36.7</text><text x="617" y="382">34.9</text><text x="379" y="393">39.4</text><text x="666" y="393">39.0</text><text x="472" y="411">34.6</text><text x="573" y="411">35.2</text><text x="523" y="421">34.7</text><text x="419" y="432">39.4</text><text x="626" y="432">39.7</text><text x="468" y="456">42.2</text><text x="577" y="456">40.9</text><text x="523" y="465">42.0</text>
</g>

<!-- right map -->
<g clip-path="url(#c2)">
<rect x="1200" y="80" width="410" height="410" fill="url(#rg)"/>
<g filter="url(#bl2)">
<ellipse cx="1404" cy="160" rx="55" ry="58" fill="#36cc98"/>
<ellipse cx="1404" cy="412" rx="55" ry="52" fill="#36cc98"/>
<ellipse cx="1404" cy="225" rx="70" ry="18" fill="#48e030"/>
<ellipse cx="1404" cy="345" rx="70" ry="18" fill="#48e030"/>
<ellipse cx="1425" cy="287" rx="48" ry="32" fill="#f0f030"/>
<ellipse cx="1430" cy="290" rx="20" ry="10" fill="#fffff0"/>
<ellipse cx="1215" cy="190" rx="16" ry="50" transform="rotate(30 1215 190)" fill="#f03a30"/>
<ellipse cx="1606" cy="283" rx="12" ry="60" fill="#f05030"/>
</g>
</g>
<circle cx="1405" cy="283" r="67" fill="none" stroke="#111" stroke-width="1.6"/>
<ellipse cx="1421" cy="288" rx="46" ry="50" fill="none" stroke="#555" stroke-width="1" stroke-dasharray="4 3"/>
<g stroke="#999" stroke-width="1"><line x1="1189" y1="85" x2="1189" y2="480"/><line x1="1205" y1="500" x2="1605" y2="500"/></g>
<g font-size="7.5" fill="#333" text-anchor="middle">
<text x="1180" y="110">8</text><text x="1180" y="153">6</text><text x="1180" y="198">4</text><text x="1180" y="241">2</text><text x="1180" y="286">0</text><text x="1180" y="330">2</text><text x="1180" y="374">4</text><text x="1180" y="418">6</text><text x="1180" y="462">8</text>
<text x="1227" y="513">8</text><text x="1271" y="513">6</text><text x="1316" y="513">4</text><text x="1360" y="513">2</text><text x="1404" y="513">0</text><text x="1449" y="513">2</text><text x="1493" y="513">4</text><text x="1538" y="513">6</text><text x="1582" y="513">8</text>
</g>
<text x="1207" y="493" font-size="13" font-weight="bold" fill="#111" text-anchor="middle">N</text>
<text x="1601" y="493" font-size="13" font-weight="bold" fill="#111" text-anchor="middle">T</text>
<text x="1585" y="95" font-size="19" font-weight="bold" fill="#111" text-anchor="middle">OS</text>
<circle cx="1212" cy="84" r="4" fill="none" stroke="#333"/><line x1="1209" y1="87" x2="1207" y2="91" stroke="#333"/><text x="1213" y="96" font-size="5" fill="#333" text-anchor="middle">9mm</text>
<g font-size="6" fill="#666" text-anchor="middle">
<text x="1400" y="79">90°</text><text x="1503" y="107">60°</text><text x="1582" y="183">30°</text><text x="1613" y="280">0°</text><text x="1582" y="393">330°</text><text x="1503" y="466">300°</text><text x="1400" y="491">270°</text><text x="1300" y="463">240°</text><text x="1222" y="386">210°</text><text x="1198" y="280">180°</text><text x="1228" y="187">150°</text><text x="1300" y="109">120°</text>
</g>
<g font-size="8" font-weight="bold" fill="#1a1a1a" text-anchor="middle" dominant-baseline="middle">
<text x="1404" y="106">-10</text><text x="1350" y="115">-5</text><text x="1460" y="115">-15</text><text x="1300" y="140">+10</text><text x="1510" y="140">-10</text><text x="1404" y="150">-21</text><text x="1354" y="161">-15</text><text x="1455" y="161">-21</text><text x="1261" y="179">+22</text><text x="1548" y="179">+4</text><text x="1312" y="190">-8</text><text x="1404" y="195">-13</text><text x="1499" y="190">-14</text><text x="1361" y="207">-13</text><text x="1450" y="207">-8</text>
<text x="1237" y="228">+19</text><text x="1282" y="233">+6</text><text x="1328" y="240">-6</text><text x="1404" y="240">+4</text><text x="1482" y="240">6</text><text x="1527" y="233">-2</text><text x="1574" y="228">+14</text><text x="1373" y="253">+2</text><text x="1436" y="253">+10</text>
<text x="1227" y="284">+22</text><text x="1271" y="284">+10</text><text x="1316" y="284">-3</text><text x="1360" y="284">+2</text><text x="1404" y="284">+14</text><text x="1450" y="284">+15</text><text x="1493" y="284">+8</text><text x="1538" y="284">+6</text><text x="1583" y="284">+22</text>
<text x="1373" y="316">+8</text><text x="1436" y="316">+13</text><text x="1404" y="328">+8</text><text x="1328" y="328">-9</text><text x="1482" y="328">+5</text><text x="1237" y="339">+18</text><text x="1282" y="335">+1</text><text x="1527" y="335">+3</text><text x="1574" y="339">+20</text>
<text x="1361" y="361">-11</text><text x="1450" y="361">3</text><text x="1312" y="378">-11</text><text x="1404" y="373">-9</text><text x="1499" y="378">-6</text><text x="1261" y="389">+6</text><text x="1548" y="389">+10</text><text x="1354" y="408">-20</text><text x="1455" y="408">-14</text><text x="1404" y="418">-20</text><text x="1300" y="428">-5</text><text x="1510" y="428">-2</text><text x="1350" y="453">-14</text><text x="1460" y="453">-10</text><text x="1404" y="463">-16</text>
</g>
<rect x="1414" y="284" width="32" height="11" fill="#fffff0" opacity=".9"/>
<text x="1430" y="293" font-size="8" font-weight="bold" fill="#1a2a90" text-anchor="middle">+16µm</text>
</svg>
</body></html>
